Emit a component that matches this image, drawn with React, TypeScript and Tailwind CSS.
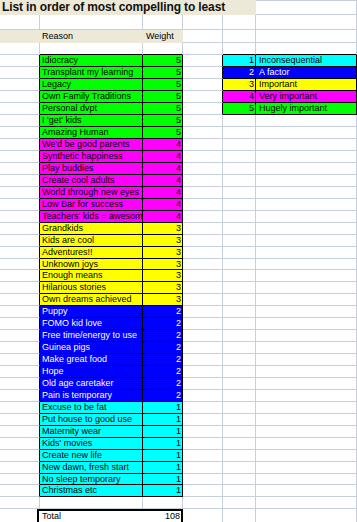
import type { ReactNode } from "react"

const GRID = "border-[#c6d0dc]"

const reasons: [string, number][] = [
  ["Idiocracy", 5],
  ["Transplant my learning", 5],
  ["Legacy", 5],
  ["Own Family Traditions", 5],
  ["Personal dvpt", 5],
  ["I 'get' kids", 5],
  ["Amazing Human", 5],
  ["We'd be good parents", 4],
  ["Synthetic happiness", 4],
  ["Play buddies", 4],
  ["Create cool adults", 4],
  ["World through new eyes", 4],
  ["Low Bar for success", 4],
  ["Teachers' kids = awesome", 4],
  ["Grandkids", 3],
  ["Kids are cool", 3],
  ["Adventures!!", 3],
  ["Unknown joys", 3],
  ["Enough means", 3],
  ["Hilarious stories", 3],
  ["Own dreams achieved", 3],
  ["Puppy", 2],
  ["FOMO kid love", 2],
  ["Free time/energy to use", 2],
  ["Guinea pigs", 2],
  ["Make great food", 2],
  ["Hope", 2],
  ["Old age caretaker", 2],
  ["Pain is temporary", 2],
  ["Excuse to be fat", 1],
  ["Put house to good use", 1],
  ["Maternity wear", 1],
  ["Kids' movies", 1],
  ["Create new life", 1],
  ["New dawn, fresh start", 1],
  ["No sleep temporary", 1],
  ["Christmas etc", 1],
]

const fills: Record<number, string> = {
  5: "bg-[#00ff00] text-black",
  4: "bg-[#ff00ff] text-black",
  3: "bg-[#ffff00] text-black",
  2: "bg-[#0000ff] text-white",
  1: "bg-[#00ffff] text-black",
}

const legend: [number, string][] = [
  [1, "Inconsequential"],
  [2, "A factor"],
  [3, "Important"],
  [4, "Very important"],
  [5, "Hugely important"],
]

function Cell({ className = "", children }: { className?: string; children?: ReactNode }) {
  return (
    <div className={`shrink-0 h-full border-r border-b overflow-hidden whitespace-nowrap leading-[11px] ${className}`}>
      {children}
    </div>
  )
}

export default function App() {
  return (
    <div className="w-[357px] h-[522px] overflow-hidden bg-white text-black text-[9px] font-['Liberation_Sans',Arial,sans-serif]">
      {/* Title row */}
      <div className="flex h-[15px]">
        <div className="w-[256px] shrink-0 bg-[#ece9d8] pl-[2px] text-[12px] leading-[15px] font-bold tracking-[-0.12px] text-[#111] whitespace-nowrap">
          List in order of most compelling to least
        </div>
        <Cell className={`w-[101px] border-t ${GRID}`} />
      </div>

      {/* Blank row */}
      <div className="flex h-[15px]">
        <Cell className={`w-[40px] ${GRID}`} />
        <Cell className={`w-[103px] ${GRID}`} />
        <Cell className={`w-[40px] ${GRID}`} />
        <Cell className={`w-[40px] ${GRID}`} />
        <Cell className={`w-[33px] ${GRID}`} />
        <Cell className={`w-[101px] ${GRID}`} />
      </div>

      {/* Header row */}
      <div className="flex h-[13px]">
        <div className="w-[183px] shrink-0 flex bg-[#ece9d8] leading-[13px]">
          <div className="w-[40px]" />
          <div className="w-[103px] pl-[2px]">Reason</div>
          <div className="w-[40px] pl-[3px]">Weight</div>
        </div>
        <Cell className={`w-[40px] ${GRID}`} />
        <Cell className={`w-[33px] ${GRID}`} />
        <Cell className={`w-[101px] ${GRID}`} />
      </div>

      {/* Row above the block */}
      <div className="flex h-[12px]">
        <Cell className={`w-[40px] ${GRID}`} />
        <Cell className={`w-[103px] border-r-[#c6d0dc] border-b-black`} />
        <Cell className={`w-[40px] border-r-[#c6d0dc] border-b-black`} />
        <Cell className={`w-[40px] ${GRID}`} />
        <Cell className={`w-[33px] border-r-[#c6d0dc] border-b-black`} />
        <Cell className={`w-[101px] border-r-[#c6d0dc] border-b-black`} />
      </div>

      {/* Reasons */}
      {reasons.map(([reason, weight], i) => {
        const key = legend[i]
        return (
          <div key={reason} className={`flex ${i % 18 === 17 ? "h-[11px]" : "h-[12px]"}`}>
            <Cell className={`w-[40px] border-b-[#c6d0dc] border-r-black`} />
            <Cell className={`w-[103px] pl-[2px] border-black ${fills[weight]}`}>{reason}</Cell>
            <Cell className={`w-[40px] pr-[1px] text-right border-black ${fills[weight]}`}>{weight}</Cell>
            {key ? (
              <>
                <Cell className={`w-[40px] border-b-[#c6d0dc] border-r-black`} />
                <Cell className={`w-[33px] pr-[1px] text-right border-black ${fills[key[0]]}`}>{key[0]}</Cell>
                <Cell className={`w-[101px] pl-[3px] border-black ${fills[key[0]]}`}>{key[1]}</Cell>
              </>
            ) : (
              <>
                <Cell className={`w-[40px] ${GRID}`} />
                <Cell className={`w-[33px] ${GRID}`} />
                <Cell className={`w-[101px] ${GRID}`} />
              </>
            )}
          </div>
        )
      })}

      {/* Blank row */}
      <div className="flex h-[12px]">
        <Cell className={`w-[40px] ${GRID}`} />
        <Cell className={`w-[103px] ${GRID}`} />
        <Cell className={`w-[40px] ${GRID}`} />
        <Cell className={`w-[40px] ${GRID}`} />
        <Cell className={`w-[33px] ${GRID}`} />
        <Cell className={`w-[101px] ${GRID}`} />
      </div>

      {/* Total */}
      <div className="flex h-[14px]">
        <div className="w-[37px] shrink-0" />
        <div className="w-[146px] shrink-0 flex justify-between border-2 border-b-0 border-black leading-[10px]">
          <span className="pl-[3px]">Total</span>
          <span className="pr-[1px]">108</span>
        </div>
        <Cell className={`w-[40px] ${GRID}`} />
        <Cell className={`w-[33px] ${GRID}`} />
        <Cell className={`w-[101px] ${GRID}`} />
      </div>
    </div>
  )
}
